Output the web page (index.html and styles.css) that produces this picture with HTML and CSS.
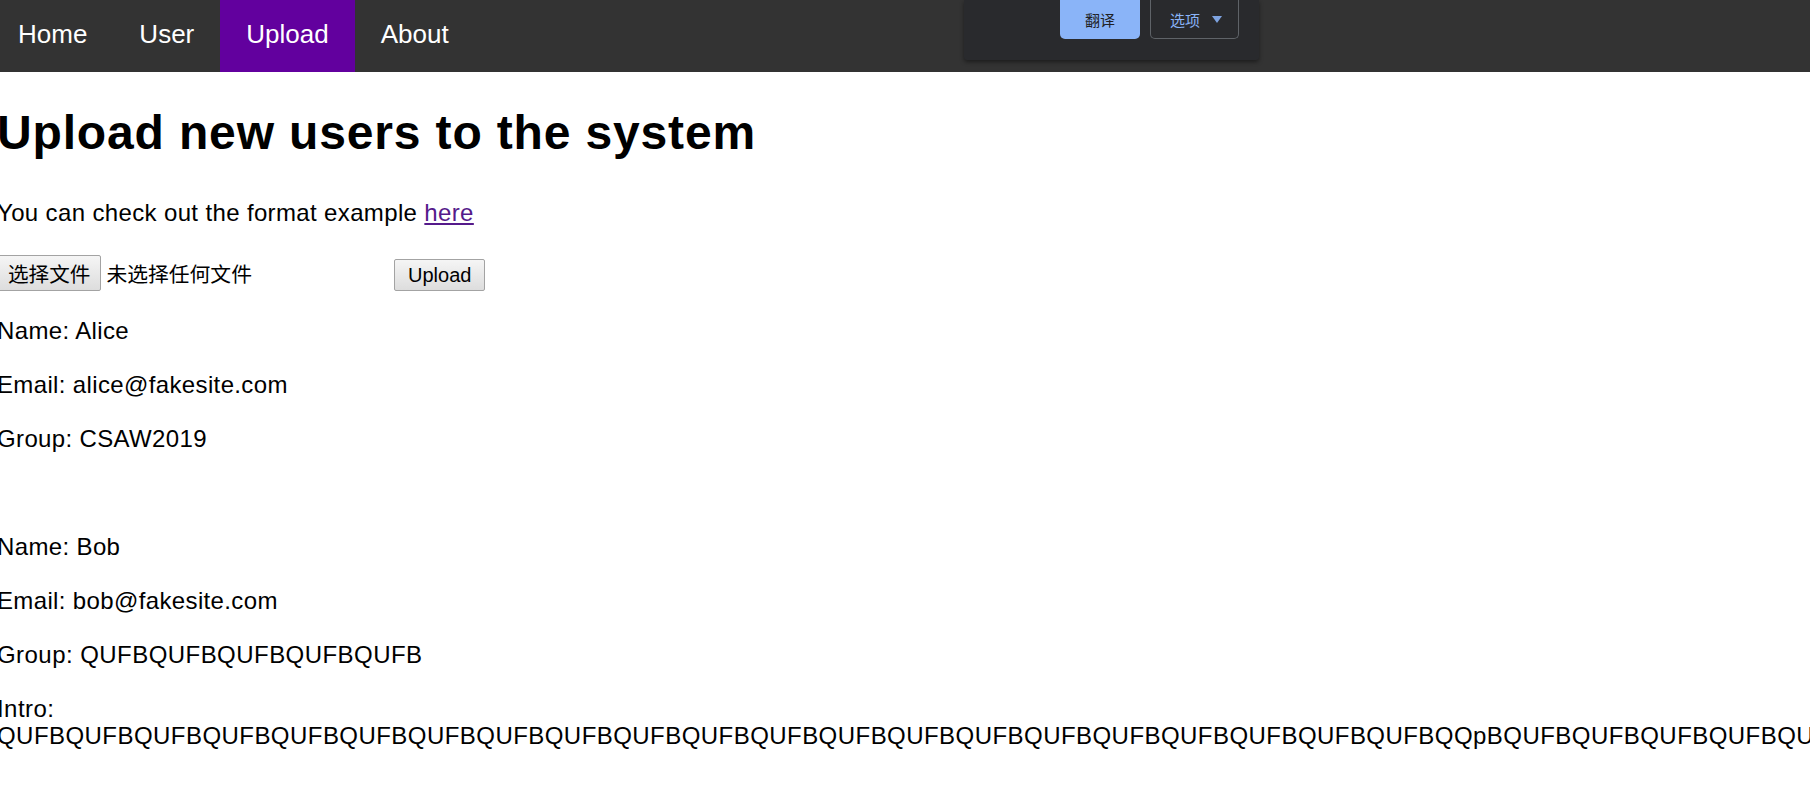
FILE: index.html
```html
<!DOCTYPE html>
<html lang="en">
<head>
<meta charset="utf-8">
<title>Upload</title>
<link rel="stylesheet" href="styles.css">
</head>
<body>
<nav class="topnav">
  <ul class="menu">
    <li><a class="item" href="#">Home</a></li>
    <li><a class="item" href="#">User</a></li>
    <li><a class="item active" href="#">Upload</a></li>
    <li><a class="item" href="#">About</a></li>
  </ul>
</nav>
<div class="translate">
  <button type="button" class="tr-btn tr-primary">翻译</button>
  <button type="button" class="tr-btn tr-options"><span>选项</span><span class="tri"></span></button>
</div>
<main class="content">
  <h1 class="title">Upload new users to the system</h1>
  <p class="lead">You can check out the format example <a class="link" href="#">here</a></p>
  <form class="upload-form">
    <div class="file-input">
      <button type="button" class="btn btn-file">选择文件</button>
      <span class="file-label">未选择任何文件</span>
    </div>
    <button type="button" class="btn btn-upload">Upload</button>
  </form>
  <section class="record">
    <p class="line">Name: Alice</p>
    <p class="line">Email: alice@fakesite.com</p>
    <p class="line">Group: CSAW2019</p>
  </section>
  <section class="record">
    <p class="line">Name: Bob</p>
    <p class="line">Email: bob@fakesite.com</p>
    <p class="line caps">Group: QUFBQUFBQUFBQUFBQUFB</p>
    <p class="line intro">Intro: QUFBQUFBQUFBQUFBQUFBQUFBQUFBQUFBQUFBQUFBQUFBQUFBQUFBQUFBQUFBQUFBQUFBQUFBQUFBQUFBQUFBQQpBQUFBQUFBQUFBQUFBQUFBQUFBQUFBQUFBQUFBQUFBQUFBQUFBQUFBQUFBQUFBQUFBQUFBQUFBQUFB</p>
  </section>
</main>
</body>
</html>
```
FILE: styles.css
```css
html, body {
  margin: 0;
  padding: 0;
  overflow: hidden;
  background: #fff;
}

body {
  font-family: "Liberation Sans", Arial, sans-serif;
  color: #000;
  position: relative;
}

.topnav {
  background: #333333;
}

.menu {
  list-style: none;
  margin: 0 0 0 -8px;
  padding: 0;
  display: flex;
}

.item {
  display: block;
  padding: 19px 26px 23px;
  font-size: 26px;
  line-height: 30px;
  color: #fff;
  text-decoration: none;
}

.item.active {
  background: #62009e;
}

.translate {
  position: absolute;
  top: 0;
  left: 964px;
  width: 295px;
  height: 60px;
  box-sizing: border-box;
  background: #292a2d;
  box-shadow: 0 2px 4px rgba(0, 0, 0, 0.45);
  border-radius: 0 0 3px 3px;
  display: flex;
  justify-content: flex-end;
  align-items: flex-start;
  gap: 10px;
  padding-right: 20px;
}

.tr-btn {
  height: 39px;
  margin: 0;
  padding: 0;
  box-sizing: border-box;
  border-radius: 0 0 5px 5px;
  font-family: "Noto Sans CJK SC", sans-serif;
  font-size: 15px;
  cursor: pointer;
}

.tr-primary {
  width: 80px;
  background: #8ab4f8;
  color: #202124;
  border: none;
}

.tr-options {
  width: 89px;
  background: transparent;
  color: #8ab4f8;
  border: 1px solid #5f6368;
  border-top: none;
  display: flex;
  align-items: center;
  padding-left: 19px;
  gap: 12px;
}

.tri {
  width: 0;
  height: 0;
  border-left: 5px solid transparent;
  border-right: 5px solid transparent;
  border-top: 7px solid #7ea3e0;
}

.content {
  margin-left: -3px;
  font-size: 24px;
  letter-spacing: 0.36px;
}

.title {
  margin: 33px 0 0;
  font-size: 48px;
  line-height: 55px;
  font-weight: bold;
  letter-spacing: 0.85px;
}

.lead {
  margin: 39px 0 0;
  line-height: 28px;
}

.link {
  color: #551a8b;
}

.upload-form {
  margin: 24px 0 0;
  padding-top: 4px;
  display: flex;
  align-items: flex-end;
  letter-spacing: 0;
}

.file-input {
  width: 391px;
  display: flex;
  align-items: center;
  gap: 5px;
}

.btn {
  font-family: "Liberation Sans", Arial, "Noto Sans CJK SC", sans-serif;
  font-size: 20px;
  color: #000;
  background: linear-gradient(#f5f5f5, #dddddd);
  border: 1px solid #a3a3a3;
  border-radius: 2px;
  margin: 0;
}

.btn-file {
  height: 36px;
  padding: 0 10px;
  font-family: "Noto Sans CJK SC", sans-serif;
  font-size: 20.6px;
}

.file-label {
  font-family: "Noto Sans CJK SC", sans-serif;
  font-size: 20.8px;
}

.btn-upload {
  height: 32px;
  padding: 0 13px;
  margin-left: 6px;
}

.record {
  margin-top: 26px;
}

.record + .record {
  margin-top: 80px;
}

.line {
  margin: 26px 0 0;
  line-height: 28px;
}

.line:first-child {
  margin-top: 0;
}

.caps,
.intro {
  letter-spacing: 0.45px;
}

.intro {
  line-height: 27px;
}
```
